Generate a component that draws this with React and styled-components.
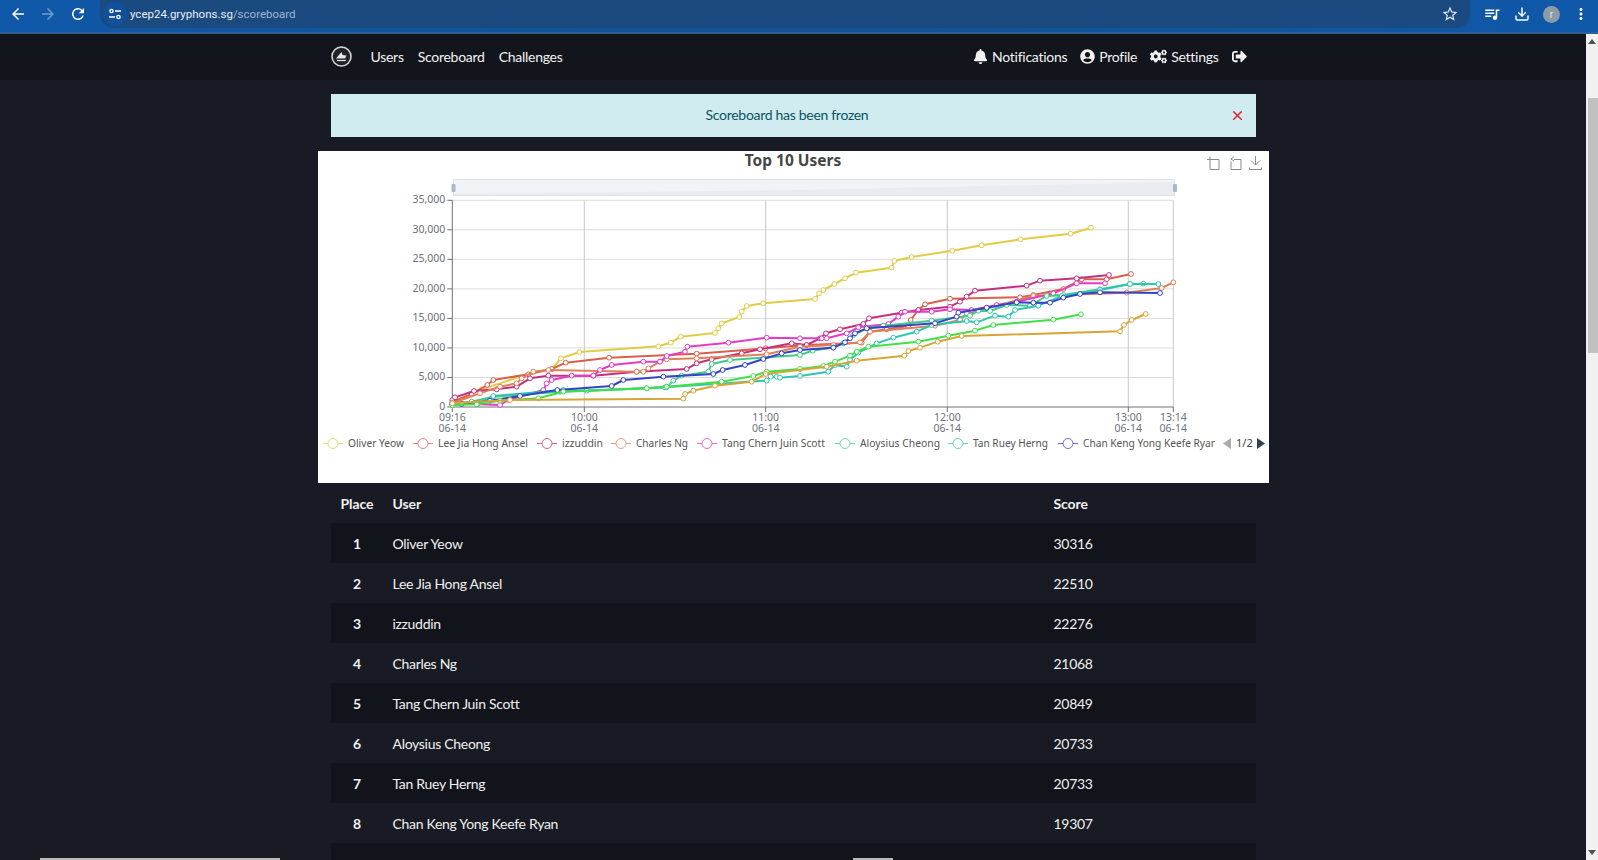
import React from 'react';
import styled, { createGlobalStyle } from 'styled-components';
import { FaBell, FaUserCircle, FaCogs, FaSignOutAlt } from 'react-icons/fa';
import { MdArrowBack, MdArrowForward, MdRefresh, MdStarBorder, MdQueueMusic, MdMoreVert } from 'react-icons/md';
import { Download, X } from 'lucide-react';

const GlobalStyle = createGlobalStyle`
  html, body { margin: 0; padding: 0; height: 100%; overflow: hidden; background: #181b23; }
  body { font-family: Lato, "Open Sans", sans-serif; }
`;

const Shell = styled.div`
  width: 1598px;
  height: 860px;
  display: flex;
  flex-direction: column;
  overflow: hidden;
  position: relative;
`;

const BrowserBar = styled.div`
  height: 32px;
  flex-shrink: 0;
  display: flex;
  align-items: flex-start;
  background: linear-gradient(90deg, #0f58a9 0%, #12528f 50%, #0f58a9 100%);
  border-bottom: 2px solid #2f5f92;
  color: #fff;
`;

const BarButton = styled.div`
  width: 30px;
  height: 28px;
  display: flex;
  align-items: center;
  justify-content: center;
  flex-shrink: 0;
  font-size: 18px;
  opacity: ${({ $dim }) => ($dim ? 0.4 : 1)};
`;

const BackGroup = styled.div`
  display: flex;
  padding-left: 3px;
  width: 100px;
  box-sizing: border-box;
  flex-shrink: 0;
`;

const Omnibox = styled.div`
  width: 1370px;
  height: 28px;
  flex-shrink: 0;
  display: flex;
  align-items: center;
  padding-left: 3px;
  padding-right: 11px;
  box-sizing: border-box;
  background: #1a4a7f;
  border-radius: 0 0 14px 14px;
`;

const SiteInfo = styled.div`
  width: 24px;
  height: 24px;
  margin-right: 3px;
  border-radius: 50%;
  background: #11509b;
  display: flex;
  align-items: center;
  justify-content: center;
`;

const Url = styled.div`
  flex: 1;
  font-family: Roboto, sans-serif;
  font-size: 11.5px;
  padding-bottom: 1px;
  color: #e9eff6;
`;

const UrlPath = styled.span`
  color: #9db6d1;
`;

const BarIcons = styled.div`
  display: flex;
  flex: 1;
  align-items: center;
  height: 28px;
  padding-left: 7px;
`;

const Avatar = styled.div`
  width: 17px;
  height: 17px;
  border-radius: 50%;
  background: #8b9ca8;
  color: #dfe6ea;
  font-family: Roboto, sans-serif;
  font-size: 10px;
  display: flex;
  align-items: center;
  justify-content: center;
  margin: 0 6px;
`;

const Body = styled.div`
  flex: 1;
  display: flex;
  min-height: 0;
`;

const Page = styled.div`
  flex: 1;
  min-width: 0;
  overflow: hidden;
`;

const Scrollbar = styled.div`
  width: 12px;
  flex-shrink: 0;
  background: #f1f1f1;
  display: flex;
  flex-direction: column;
  align-items: stretch;
`;

const ScrollArrow = styled.div`
  height: 15px;
  flex-shrink: 0;
  display: flex;
  align-items: center;
  justify-content: center;
  &::before {
    content: '';
    border-left: 4px solid transparent;
    border-right: 4px solid transparent;
    ${({ $down }) => ($down ? 'border-top: 5px solid #505050;' : 'border-bottom: 5px solid #505050;')}
  }
`;

const ScrollThumb = styled.div`
  height: 255px;
  margin: 49px 0 0 2px;
  background: #c1c1c1;
`;

const ScrollSpacer = styled.div`
  flex: 1;
`;

const Nav = styled.nav`
  height: 46px;
  background: #13151c;
  display: flex;
  justify-content: center;
`;

const NavInner = styled.div`
  width: 925px;
  padding-bottom: 2px;
  box-sizing: border-box;
  display: flex;
  align-items: center;
  color: #f1f1f1;
  font-size: 14px;
  letter-spacing: -0.27px;
`;

const NavLinks = styled.div`
  display: flex;
  align-items: center;
  gap: 14px;
  margin-left: 19px;
  flex: 1;
`;

const NavRight = styled.div`
  display: flex;
  align-items: center;
  gap: 13px;
  padding-right: 9px;
`;

const NavItem = styled.span`
  display: inline-flex;
  align-items: center;
  gap: 4px;
  svg { font-size: 15px; }
`;

const Container = styled.div`
  width: 925px;
  margin: 0 auto;
  padding-top: 14px;
`;

const Alert = styled.div`
  height: 43px;
  padding: 0 12px 3px 0;
  box-sizing: border-box;
  display: flex;
  align-items: center;
  justify-content: center;
  position: relative;
  background: #d1ecf1;
  color: #0c5460;
  font-size: 14px;
  letter-spacing: -0.3px;
`;

const Close = styled.span`
  position: absolute;
  right: 11px;
  top: 14px;
  color: #e01f2d;
  line-height: 0;
`;

const ChartCard = styled.div`
  width: 951px;
  height: 332px;
  margin: 14px -13px 0;
  background: #fff;
`;

const ChartSvg = styled.svg`
  display: block;
  width: 951px;
  height: 333px;
  overflow: visible;
`;

const ChartTitle = styled.text`
  font-family: "Noto Sans", sans-serif;
  font-size: 15.5px;
  font-weight: 700;
  fill: #464646;
  text-anchor: middle;
`;

const AxisLabel = styled.text`
  font-family: "Noto Sans", sans-serif;
  font-size: 10.5px;
  fill: #6e7079;
  text-anchor: ${({ $anchor }) => $anchor || 'middle'};
`;

const LegendLabel = styled.text`
  font-family: "Noto Sans", sans-serif;
  font-size: 10.5px;
  fill: #555;
`;

const PageLabel = styled.text`
  font-family: "Noto Sans", sans-serif;
  font-size: 11px;
  fill: #444;
`;

const Board = styled.table`
  width: 925px;
  border-collapse: collapse;
  table-layout: fixed;
  color: #f0f0f0;
  font-size: 14px;
  letter-spacing: -0.3px;
`;

const PlaceCol = styled.col`
  width: 53px;
`;

const ScoreCol = styled.col`
  width: 211px;
`;

const HeadCell = styled.th`
  height: 40px;
  padding: ${({ $center }) => ($center ? '0 8px' : '0 8px 0 9px')};
  box-sizing: border-box;
  font-weight: 700;
  font-size: 14px;
  letter-spacing: -0.1px;
  text-align: ${({ $center }) => ($center ? 'center' : 'left')};
`;

const Row = styled.tr`
  height: 40px;
  background: ${({ $odd }) => ($odd ? '#12141b' : 'transparent')};
`;

const Cell = styled.td`
  padding: ${({ $center }) => ($center ? '0 8px' : '0 8px 0 9px')};
  box-sizing: border-box;
  font-weight: ${({ $center }) => ($center ? 700 : 400)};
  text-align: ${({ $center }) => ($center ? 'center' : 'left')};
`;

const BottomStrip = styled.div`
  position: absolute;
  bottom: 0;
  left: ${({ $left }) => $left}px;
  width: ${({ $width }) => $width}px;
  height: 2px;
  background: #b9b9b9;
`;

// points are read off 3x crops of the plot: a = left half, b = right half
const series = [
  {
    color: '#e2cc45',
    a: [[157, 700], [245, 658], [400, 607], [455, 597], [483, 565], [538, 546], [775, 529], [812, 518], [842, 500], [945, 489], [955, 475], [965, 460], [1018, 441], [1025, 425], [1040, 408], [1090, 400]],
    b: [[45, 387], [57, 370], [70, 360], [103, 342], [135, 325], [168, 308], [275, 293], [283, 273], [335, 261], [457, 242], [545, 226], [662, 208], [812, 191], [873, 173]],
  },
  {
    color: '#d9604a',
    a: [[157, 695], [215, 672], [262, 645], [280, 630], [385, 613], [455, 597], [497, 578], [627, 563], [890, 551], [1097, 535]],
    b: [[20, 525], [185, 518], [210, 485], [260, 478], [325, 468], [332, 450], [355, 420], [375, 403], [450, 386], [660, 382], [700, 375], [790, 357], [845, 328], [920, 328], [993, 312]],
  },
  {
    color: '#c4307f',
    a: [[157, 690], [165, 682], [222, 663], [290, 658], [350, 650], [390, 625], [445, 617], [580, 617], [710, 605], [860, 597], [890, 580], [935, 568], [1025, 550], [1080, 538], [1175, 520]],
    b: [[20, 525], [60, 505], [78, 490], [120, 478], [190, 462], [207, 445], [305, 428], [355, 420], [450, 410], [480, 395], [500, 380], [525, 362], [680, 347], [720, 332], [830, 325], [927, 315]],
  },
  {
    color: '#e0805a',
    a: [[157, 700], [240, 670], [300, 650], [350, 640], [365, 625], [400, 605], [445, 600], [710, 605], [730, 605], [745, 595], [780, 575], [800, 568], [890, 565], [1100, 553]],
    b: [[0, 530], [100, 525], [180, 517], [210, 485], [405, 467], [480, 450], [500, 430], [700, 378], [980, 368], [1085, 354], [1120, 337]],
  },
  {
    color: '#e23cc6',
    a: [[157, 700], [300, 705], [325, 690], [430, 660], [440, 640], [455, 630], [515, 617], [580, 617], [600, 600], [635, 585], [730, 575], [780, 575], [800, 558], [855, 545], [862, 530], [985, 518], [1100, 503]],
    b: [[0, 505], [65, 505], [80, 505], [140, 490], [175, 472], [265, 462], [295, 440], [315, 425], [395, 425], [450, 418], [515, 420], [590, 405], [650, 395], [760, 370], [830, 340], [915, 340]],
  },
  {
    color: '#3fc98a',
    a: [[157, 700], [215, 695], [280, 680], [480, 665], [740, 655], [800, 652], [820, 632], [845, 617], [925, 605], [935, 582], [990, 570]],
    b: [[0, 555], [38, 542], [100, 532], [130, 520], [160, 495], [200, 475], [250, 467], [395, 452], [510, 437], [535, 422], [570, 423], [620, 405], [690, 407], [740, 378], [790, 375], [900, 358], [990, 342], [1030, 341]],
  },
  {
    color: '#2fc6ae',
    a: [[157, 705], [235, 700], [280, 678], [490, 660], [560, 662], [795, 652], [1100, 632], [1112, 620], [1130, 620], [1140, 623]],
    b: [[0, 618], [85, 605], [105, 585], [140, 590], [150, 570], [175, 548], [230, 520], [280, 503], [350, 485], [395, 465], [500, 453], [530, 457], [585, 437], [625, 440], [645, 420], [715, 407], [785, 378], [900, 360], [990, 342], [1075, 342]],
  },
  {
    color: '#3344c4',
    a: [[157, 703], [185, 702], [270, 692], [360, 678], [472, 660], [635, 648], [670, 630], [790, 620], [940, 612], [968, 600], [1035, 585], [1090, 567], [1145, 550]],
    b: [[0, 540], [100, 533], [135, 517], [150, 505], [165, 490], [200, 475], [405, 460], [470, 440], [475, 428], [560, 413], [650, 397], [700, 398], [750, 398], [790, 383], [840, 372], [900, 367], [1080, 369]],
  },
  {
    color: '#3fe04a',
    a: [[157, 705], [230, 703], [300, 692], [415, 685], [490, 665], [740, 655], [800, 650], [965, 635], [1060, 618], [1100, 605]],
    b: [[0, 597], [70, 588], [105, 575], [150, 557], [170, 545], [205, 530], [355, 515], [445, 497], [525, 482], [580, 465], [760, 449], [843, 433]],
  },
  {
    color: '#d6a536',
    a: [[157, 700], [330, 690], [850, 686], [855, 672], [880, 662], [945, 647], [1055, 635], [1097, 612]],
    b: [[80, 590], [170, 572], [313, 557], [325, 543], [360, 533], [413, 515], [485, 498], [960, 484], [972, 465], [995, 450], [1037, 432]],
  },
];

const toPage = (zx, zy, offset) => [offset + zx / 3, 170 + zy / 3];

const seriesPoints = (s) => [
  ...s.a.map(([x, y]) => toPage(x, y, 400)),
  ...s.b.map(([x, y]) => toPage(x, y, 800)),
];

const PLOT = { left: 452.3, right: 1173.3, top: 200.3, bottom: 407 };
const yTicks = [35000, 30000, 25000, 20000, 15000, 10000, 5000, 0];
const xTicks = [
  { x: 452.3, label: '09:16' },
  { x: 584.3, label: '10:00' },
  { x: 765.7, label: '11:00' },
  { x: 947.3, label: '12:00' },
  { x: 1128.3, label: '13:00' },
  { x: 1173.3, label: '13:14' },
];

const legend = [
  { name: 'Oliver Yeow', color: '#e2cc45', icon: 333, text: 348, width: 56 },
  { name: 'Lee Jia Hong Ansel', color: '#d9604a', icon: 423, text: 438, width: 90 },
  { name: 'izzuddin', color: '#c4307f', icon: 547, text: 562, width: 41 },
  { name: 'Charles Ng', color: '#e0805a', icon: 621, text: 636, width: 52 },
  { name: 'Tang Chern Juin Scott', color: '#e23cc6', icon: 707, text: 722, width: 103 },
  { name: 'Aloysius Cheong', color: '#3fc98a', icon: 845, text: 860, width: 80 },
  { name: 'Tan Ruey Herng', color: '#2fc6ae', icon: 958, text: 973, width: 75 },
  { name: 'Chan Keng Yong Keefe Ryan', color: '#3344c4', icon: 1068, text: 1083, width: 134 },
];

const rows = [
  ['1', 'Oliver Yeow', '30316'],
  ['2', 'Lee Jia Hong Ansel', '22510'],
  ['3', 'izzuddin', '22276'],
  ['4', 'Charles Ng', '21068'],
  ['5', 'Tang Chern Juin Scott', '20849'],
  ['6', 'Aloysius Cheong', '20733'],
  ['7', 'Tan Ruey Herng', '20733'],
  ['8', 'Chan Keng Yong Keefe Ryan', '19307'],
];

const Chart = () => (
  <ChartSvg viewBox="318 151 951 333">
    <defs>
      <clipPath id="legend-clip">
        <rect x="318" y="430" width="897" height="30" />
      </clipPath>
    </defs>
    <ChartTitle x="793" y="166">Top 10 Users</ChartTitle>

    {/* toolbox */}
    <g fill="none" stroke="#8a8a8a" strokeWidth="1" transform="translate(-2 -1)">
      <path d="M1209 160.5h3M1212 157.5v3M1212 160.5h9v10h-9z" />
      <path d="M1236 160.5h7v10h-10v-8M1233 160l3-2.5M1233 160l3 2" />
      <path d="M1257.5 157v9M1253 161.5l4.5 4.5 4.5-4.5M1251.5 168.5v2h12v-2" />
    </g>

    {/* data zoom */}
    <rect x="453.5" y="179.5" width="721" height="16" fill="#f1f3f6" stroke="#dde2e9" />
    <path d="M454 194L800 190L1174 182V195H454Z" fill="#e8ebf0" />
    <rect x="451.5" y="184" width="4" height="8" rx="1" fill="#a9b8cc" />
    <rect x="1173" y="184" width="4" height="8" rx="1" fill="#a9b8cc" />

    {/* grid */}
    {yTicks.map((v, i) => {
      const y = PLOT.top + (i * (PLOT.bottom - PLOT.top)) / 7;
      return (
        <g key={v}>
          {v > 0 && <line x1={PLOT.left} x2={PLOT.right} y1={y} y2={y} stroke="#dcdcdc" />}
          <line x1={PLOT.left - 5} x2={PLOT.left} y1={y} y2={y} stroke="#6e7079" />
          <AxisLabel $anchor="end" x={PLOT.left - 7} y={y + 3}>{v.toLocaleString('en-US')}</AxisLabel>
        </g>
      );
    })}
    {xTicks.map((t, i) => (
      <g key={t.label}>
        {i > 0 && <line x1={t.x} x2={t.x} y1={PLOT.top} y2={PLOT.bottom} stroke="#c9c9c9" />}
        <line x1={t.x} x2={t.x} y1={PLOT.bottom} y2={PLOT.bottom + 5} stroke="#6e7079" />
        <AxisLabel x={t.x} y="421">{t.label}</AxisLabel>
        <AxisLabel x={t.x} y="432">06-14</AxisLabel>
      </g>
    ))}
    <line x1={PLOT.left} x2={PLOT.left} y1={PLOT.top} y2={PLOT.bottom} stroke="#6e7079" />
    <line x1={PLOT.left} x2={PLOT.right} y1={PLOT.bottom} y2={PLOT.bottom} stroke="#6e7079" />

    {/* lines */}
    {series.map((s) => {
      const pts = seriesPoints(s);
      return (
        <g key={s.color}>
          <polyline points={pts.map((p) => p.join(',')).join(' ')} fill="none" stroke={s.color} strokeWidth="2" strokeLinejoin="round" />
          {pts.map(([x, y], i) => (
            <circle key={i} cx={x} cy={y} r="2.4" fill="#fff" stroke={s.color} strokeWidth="1" />
          ))}
        </g>
      );
    })}

    {/* legend */}
    <g clipPath="url(#legend-clip)">
      {legend.map((l) => (
        <g key={l.name}>
          <line x1={l.icon - 10} x2={l.icon + 10} y1="443.5" y2="443.5" stroke={l.color} strokeOpacity="0.75" />
          <circle cx={l.icon} cy="443.5" r="5" fill="#fff" stroke={l.color} strokeOpacity="0.75" />
          <LegendLabel x={l.text} y="447" textLength={l.width} lengthAdjust="spacingAndGlyphs">{l.name}</LegendLabel>
        </g>
      ))}
    </g>
    <path d="M1231 438v11l-8-5.5z" fill="#aaa" />
    <PageLabel x="1236" y="447">1/2</PageLabel>
    <path d="M1257 438v11l8-5.5z" fill="#2f4554" />
  </ChartSvg>
);

const Logo = () => (
  <svg width="21" height="21" viewBox="0 0 21 21">
    <circle cx="10.5" cy="10.5" r="9.5" fill="#20232a" stroke="#d5d5d5" strokeWidth="1.6" />
    <path d="M5 12.5l5.5-6.5 1 3 4 .5-1.5 3z" fill="#e8e8e8" />
    <path d="M6 14.5h9" stroke="#e8e8e8" strokeWidth="1.2" />
  </svg>
);

const SiteIcon = () => (
  <svg width="14" height="14" viewBox="0 0 14 14" fill="none" stroke="#fff" strokeWidth="1.4">
    <circle cx="3.5" cy="4" r="1.6" />
    <path d="M7 4h6M1 10h6" />
    <circle cx="10.5" cy="10" r="1.6" />
  </svg>
);

export default function App() {
  return (
    <Shell>
      <GlobalStyle />
      <BrowserBar>
        <BackGroup>
          <BarButton><MdArrowBack /></BarButton>
          <BarButton $dim><MdArrowForward /></BarButton>
          <BarButton><MdRefresh /></BarButton>
        </BackGroup>
        <Omnibox>
          <SiteInfo><SiteIcon /></SiteInfo>
          <Url>ycep24.gryphons.sg<UrlPath>/scoreboard</UrlPath></Url>
          <MdStarBorder size={18} color="#dfe8f2" />
        </Omnibox>
        <BarIcons>
          <BarButton><MdQueueMusic /></BarButton>
          <BarButton><Download size={16} strokeWidth={2.2} /></BarButton>
          <Avatar>r</Avatar>
          <BarButton><MdMoreVert /></BarButton>
        </BarIcons>
      </BrowserBar>

      <Body>
        <Page>
          <Nav>
            <NavInner>
              <Logo />
              <NavLinks>
                <NavItem>Users</NavItem>
                <NavItem>Scoreboard</NavItem>
                <NavItem>Challenges</NavItem>
              </NavLinks>
              <NavRight>
                <NavItem><FaBell />Notifications</NavItem>
                <NavItem><FaUserCircle />Profile</NavItem>
                <NavItem><FaCogs size={17} />Settings</NavItem>
                <NavItem><FaSignOutAlt /></NavItem>
              </NavRight>
            </NavInner>
          </Nav>

          <Container>
            <Alert>
              Scoreboard has been frozen
              <Close><X size={15} strokeWidth={2.4} /></Close>
            </Alert>
            <ChartCard><Chart /></ChartCard>
            <Board>
              <colgroup>
                <PlaceCol />
                <col />
                <ScoreCol />
              </colgroup>
              <thead>
                <tr>
                  <HeadCell $center>Place</HeadCell>
                  <HeadCell>User</HeadCell>
                  <HeadCell>Score</HeadCell>
                </tr>
              </thead>
              <tbody>
                {rows.map(([place, user, score], i) => (
                  <Row key={place} $odd={i % 2 === 0}>
                    <Cell $center>{place}</Cell>
                    <Cell>{user}</Cell>
                    <Cell>{score}</Cell>
                  </Row>
                ))}
                <Row $odd><Cell colSpan="3" /></Row>
              </tbody>
            </Board>
          </Container>
        </Page>
        <Scrollbar>
          <ScrollArrow />
          <ScrollThumb />
          <ScrollSpacer />
          <ScrollArrow $down />
        </Scrollbar>
      </Body>
      <BottomStrip $left={40} $width={240} />
      <BottomStrip $left={853} $width={40} />
    </Shell>
  );
}
